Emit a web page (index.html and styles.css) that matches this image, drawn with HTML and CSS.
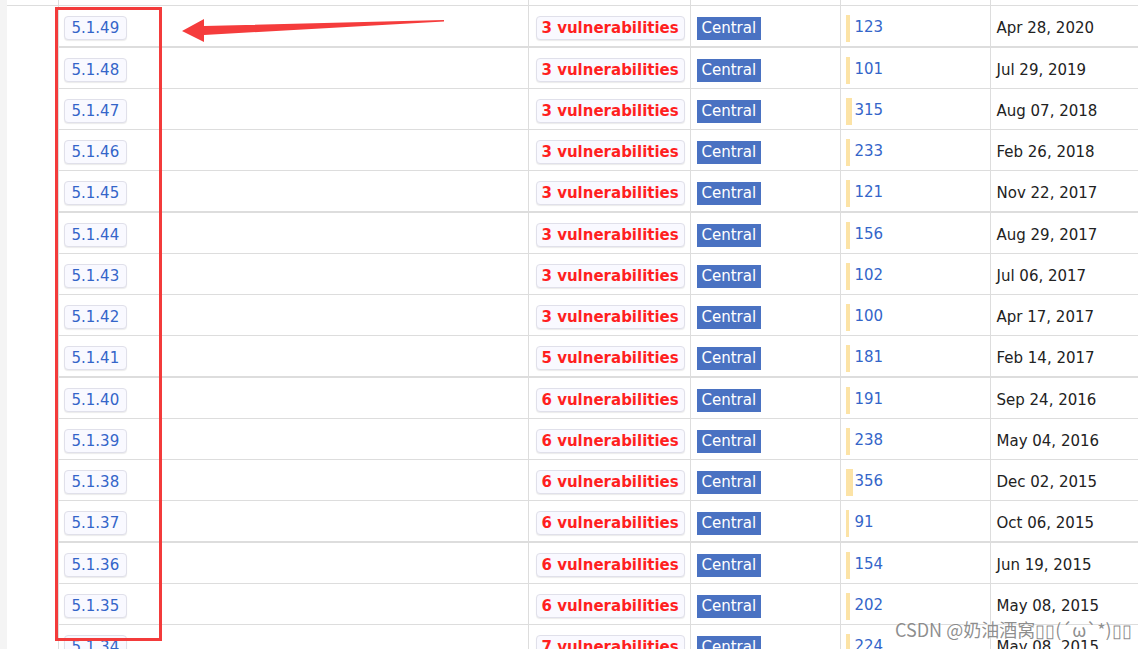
FILE: index.html
```html
<!DOCTYPE html>
<html>
<head>
    <meta charset="utf-8">
    <title>mysql-connector-java versions</title>
    <link rel="stylesheet" href="styles.css">
</head>
<body>
    <div class="page">
        <table class="grid versions">
            <colgroup>
                <col class="c-group">
                <col class="c-version">
                <col class="c-vuln">
                <col class="c-repo">
                <col class="c-usage">
                <col class="c-date">
            </colgroup>
            <tbody>
                <tr class="cut"><td></td><td></td><td></td><td></td><td></td><td></td></tr>
                <tr class="first">
                    <td class="group" rowspan="17"></td>
                    <td><a class="vbtn">5.1.49</a></td>
                    <td><a class="vbtn vuln">3 vulnerabilities</a></td>
                    <td><span class="repo">Central</span></td>
                    <td><a class="rb" style="background-size: 4px 100%">123</a></td>
                    <td class="date">Apr 28, 2020</td>
                </tr>
                <tr class="split">
                    <td><a class="vbtn">5.1.48</a></td>
                    <td><a class="vbtn vuln">3 vulnerabilities</a></td>
                    <td><span class="repo">Central</span></td>
                    <td><a class="rb" style="background-size: 4px 100%">101</a></td>
                    <td class="date">Jul 29, 2019</td>
                </tr>
                <tr>
                    <td><a class="vbtn">5.1.47</a></td>
                    <td><a class="vbtn vuln">3 vulnerabilities</a></td>
                    <td><span class="repo">Central</span></td>
                    <td><a class="rb" style="background-size: 6px 100%">315</a></td>
                    <td class="date">Aug 07, 2018</td>
                </tr>
                <tr>
                    <td><a class="vbtn">5.1.46</a></td>
                    <td><a class="vbtn vuln">3 vulnerabilities</a></td>
                    <td><span class="repo">Central</span></td>
                    <td><a class="rb" style="background-size: 4px 100%">233</a></td>
                    <td class="date">Feb 26, 2018</td>
                </tr>
                <tr>
                    <td><a class="vbtn">5.1.45</a></td>
                    <td><a class="vbtn vuln">3 vulnerabilities</a></td>
                    <td><span class="repo">Central</span></td>
                    <td><a class="rb" style="background-size: 4px 100%">121</a></td>
                    <td class="date">Nov 22, 2017</td>
                </tr>
                <tr class="split">
                    <td><a class="vbtn">5.1.44</a></td>
                    <td><a class="vbtn vuln">3 vulnerabilities</a></td>
                    <td><span class="repo">Central</span></td>
                    <td><a class="rb" style="background-size: 4px 100%">156</a></td>
                    <td class="date">Aug 29, 2017</td>
                </tr>
                <tr>
                    <td><a class="vbtn">5.1.43</a></td>
                    <td><a class="vbtn vuln">3 vulnerabilities</a></td>
                    <td><span class="repo">Central</span></td>
                    <td><a class="rb" style="background-size: 4px 100%">102</a></td>
                    <td class="date">Jul 06, 2017</td>
                </tr>
                <tr>
                    <td><a class="vbtn">5.1.42</a></td>
                    <td><a class="vbtn vuln">3 vulnerabilities</a></td>
                    <td><span class="repo">Central</span></td>
                    <td><a class="rb" style="background-size: 4px 100%">100</a></td>
                    <td class="date">Apr 17, 2017</td>
                </tr>
                <tr>
                    <td><a class="vbtn">5.1.41</a></td>
                    <td><a class="vbtn vuln">5 vulnerabilities</a></td>
                    <td><span class="repo">Central</span></td>
                    <td><a class="rb" style="background-size: 4px 100%">181</a></td>
                    <td class="date">Feb 14, 2017</td>
                </tr>
                <tr class="split">
                    <td><a class="vbtn">5.1.40</a></td>
                    <td><a class="vbtn vuln">6 vulnerabilities</a></td>
                    <td><span class="repo">Central</span></td>
                    <td><a class="rb" style="background-size: 4px 100%">191</a></td>
                    <td class="date">Sep 24, 2016</td>
                </tr>
                <tr>
                    <td><a class="vbtn">5.1.39</a></td>
                    <td><a class="vbtn vuln">6 vulnerabilities</a></td>
                    <td><span class="repo">Central</span></td>
                    <td><a class="rb" style="background-size: 4px 100%">238</a></td>
                    <td class="date">May 04, 2016</td>
                </tr>
                <tr>
                    <td><a class="vbtn">5.1.38</a></td>
                    <td><a class="vbtn vuln">6 vulnerabilities</a></td>
                    <td><span class="repo">Central</span></td>
                    <td><a class="rb" style="background-size: 7px 100%">356</a></td>
                    <td class="date">Dec 02, 2015</td>
                </tr>
                <tr>
                    <td><a class="vbtn">5.1.37</a></td>
                    <td><a class="vbtn vuln">6 vulnerabilities</a></td>
                    <td><span class="repo">Central</span></td>
                    <td><a class="rb" style="background-size: 3px 100%">91</a></td>
                    <td class="date">Oct 06, 2015</td>
                </tr>
                <tr class="split">
                    <td><a class="vbtn">5.1.36</a></td>
                    <td><a class="vbtn vuln">6 vulnerabilities</a></td>
                    <td><span class="repo">Central</span></td>
                    <td><a class="rb" style="background-size: 4px 100%">154</a></td>
                    <td class="date">Jun 19, 2015</td>
                </tr>
                <tr>
                    <td><a class="vbtn">5.1.35</a></td>
                    <td><a class="vbtn vuln">6 vulnerabilities</a></td>
                    <td><span class="repo">Central</span></td>
                    <td><a class="rb" style="background-size: 4px 100%">202</a></td>
                    <td class="date">May 08, 2015</td>
                </tr>
                <tr>
                    <td><a class="vbtn">5.1.34</a></td>
                    <td><a class="vbtn vuln">7 vulnerabilities</a></td>
                    <td><span class="repo">Central</span></td>
                    <td><a class="rb" style="background-size: 4px 100%">224</a></td>
                    <td class="date">May 08, 2015</td>
                </tr>
            </tbody>
        </table>

        <!-- annotation drawn over the screenshot -->
        <div class="mark-box"></div>
        <svg class="mark-arrow" width="270" height="30" viewBox="0 0 270 30">
            <polygon points="0,14 22,2 22,9 262,3 262,4.5 22,18 22,25" fill="#f53c3c"/>
        </svg>
        <div class="watermark">CSDN @奶油酒窝▯▯(´ω`*)▯▯</div>
    </div>
</body>
</html>
```

FILE: styles.css
```css
html, body {
    margin: 0;
    height: 100%;
    overflow: hidden;
}

body {
    background: #f4f4f4;
    font-family: "DejaVu Sans", Verdana, sans-serif;
    font-size: 15px;
    color: #222;
}

.page {
    position: relative;
    margin-left: 7px;
    height: 100%;
    background: #fff;
}

.grid {
    border-collapse: collapse;
    table-layout: fixed;
    width: 1160px;
}

.c-group { width: 51px; }
.c-version { width: 470px; }
.c-vuln { width: 162px; }
.c-repo { width: 150px; }
.c-usage { width: 150px; }
.c-date { width: 177px; }

.grid td {
    height: 36px;
    padding: 4px 6px 0;
    border: 1px solid #ddd;
    vertical-align: middle;
    white-space: nowrap;
}

.grid tr.cut td {
    height: 5px;
    padding: 0;
    border-top: 0;
}

.grid tr.split td {
    border-top: 2px solid #ddd;
}

.grid td.group {
    border-left: 0;
}

.grid tr.cut td:first-child {
    border-left: 0;
}

.versions td:nth-last-child(5) { padding-left: 5px; }
.versions td:nth-last-child(4) { padding-left: 7px; }
.versions td:nth-last-child(2) { padding-left: 5px; }

.vbtn {
    display: inline-block;
    padding: 2px 7px;
    line-height: 18px;
    border: 1px solid #e0e0ea;
    border-radius: 4px;
    background: #f9f9ff;
    box-shadow: 0 1px 1px rgba(0, 0, 0, 0.08);
    color: #3465c9;
    text-decoration: none;
}

.vuln {
    padding: 2px 5px;
    color: #ff1f1f;
    font-weight: bold;
}

.repo {
    display: inline-block;
    padding: 2px 5px;
    line-height: 19px;
    background: #4a72c2;
    color: #fff;
}

.rb {
    display: inline-block;
    height: 27px;
    line-height: 25px;
    padding-left: 9px;
    background: linear-gradient(#fce3a6, #fce3a6) no-repeat left top;
    color: #3465c9;
}

.date {
    color: #222;
}

.mark-box {
    position: absolute;
    left: 48px;
    top: 7px;
    width: 107px;
    height: 634px;
    box-sizing: border-box;
    border: 3px solid #f33b3b;
}

.mark-arrow {
    position: absolute;
    left: 175px;
    top: 17px;
}

.watermark {
    position: absolute;
    left: 888px;
    top: 616px;
    font-family: "Noto Sans CJK SC", sans-serif;
    font-size: 18px;
    color: rgba(105, 105, 105, 0.75);
    text-shadow: 0 0 2px #fff;
    white-space: nowrap;
}
```
